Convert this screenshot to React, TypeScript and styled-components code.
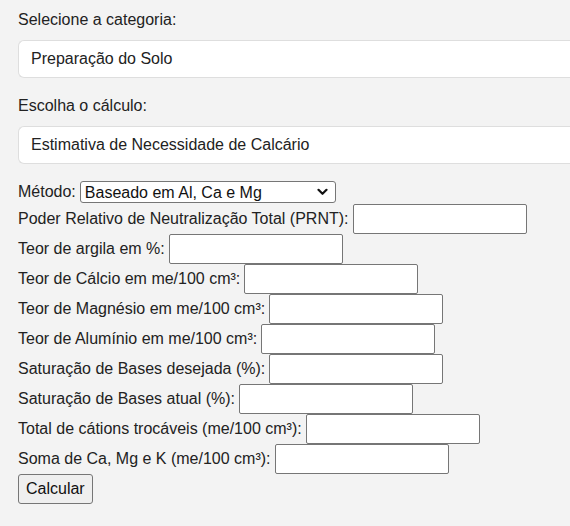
import React from "react";
import styled, { createGlobalStyle } from "styled-components";

const Global = createGlobalStyle`
  html, body {
    margin: 0;
    padding: 0;
    background: #f3f3f3;
    overflow: hidden;
  }
  body {
    font-family: "Liberation Sans", Arial, Helvetica, sans-serif;
    font-size: 16px;
    color: #222;
  }
`;

const Page = styled.div`
  padding: 11px 0 0 18px;
`;

const FieldLabel = styled.div`
  line-height: 18px;
  height: 18px;
  margin-bottom: 11px;
`;

const BigSelect = styled.div<{ $gap: number }>`
  box-sizing: border-box;
  width: 552px;
  height: 38px;
  display: flex;
  align-items: center;
  padding: 0 12px;
  background: #fff;
  border: 1px solid #dedede;
  border-right: none;
  border-radius: 6px 0 0 6px;
  margin-bottom: ${(p) => p.$gap}px;
  line-height: 18px;
`;

const MethodRow = styled.div`
  display: flex;
  align-items: center;
  gap: 4px;
  height: 24px;
`;

const SelectWrap = styled.div`
  position: relative;
  display: flex;
`;

const NativeSelect = styled.select`
  appearance: none;
  -webkit-appearance: none;
  box-sizing: border-box;
  width: 256px;
  height: 22px;
  padding: 0 22px 0 4px;
  font-family: inherit;
  font-size: 16px;
  color: #111;
  background: #fff;
  border: 1px solid #767676;
  border-radius: 3px;
  outline: none;
`;

const Chevron = styled.svg`
  position: absolute;
  right: 8px;
  top: 7px;
  width: 11px;
  height: 8px;
  pointer-events: none;
`;

const Row = styled.div`
  display: flex;
  align-items: center;
  gap: 4px;
  height: 30px;
  line-height: 18px;
`;

const TextInput = styled.input`
  box-sizing: border-box;
  width: 174px;
  height: 30px;
  padding: 4px 5px;
  font-family: inherit;
  font-size: 16px;
  background: #fff;
  border: 1px solid #767676;
  border-radius: 2px;
  outline: none;
`;

const Button = styled.button`
  box-sizing: border-box;
  height: 30px;
  padding: 0 7px;
  font-family: inherit;
  font-size: 16px;
  color: #111;
  background: #efefef;
  border: 1px solid #767676;
  border-radius: 3px;
`;

const fields = [
  "Poder Relativo de Neutralização Total (PRNT):",
  "Teor de argila em %:",
  "Teor de Cálcio em me/100 cm³:",
  "Teor de Magnésio em me/100 cm³:",
  "Teor de Alumínio em me/100 cm³:",
  "Saturação de Bases desejada (%):",
  "Saturação de Bases atual (%):",
  "Total de cátions trocáveis (me/100 cm³):",
  "Soma de Ca, Mg e K (me/100 cm³):",
];

export default function App() {
  return (
    <>
      <Global />
      <Page>
        <FieldLabel>Selecione a categoria:</FieldLabel>
        <BigSelect $gap={19}>Preparação do Solo</BigSelect>
        <FieldLabel>Escolha o cálculo:</FieldLabel>
        <BigSelect $gap={16}>Estimativa de Necessidade de Calcário</BigSelect>
        <MethodRow>
          <span>Método:</span>
          <SelectWrap>
            <NativeSelect defaultValue="alcamg">
              <option value="alcamg">Baseado em Al, Ca e Mg</option>
              <option value="sat">Saturação por Bases</option>
            </NativeSelect>
            <Chevron viewBox="0 0 11 8">
              <path d="M1.5 1.8 L5.5 5.8 L9.5 1.8" fill="none" stroke="#111" strokeWidth="2.2" strokeLinecap="round" strokeLinejoin="round" />
            </Chevron>
          </SelectWrap>
        </MethodRow>
        {fields.map((f) => (
          <Row key={f}>
            <span>{f}</span>
            <TextInput type="text" />
          </Row>
        ))}
        <Button>Calcular</Button>
      </Page>
    </>
  );
}
